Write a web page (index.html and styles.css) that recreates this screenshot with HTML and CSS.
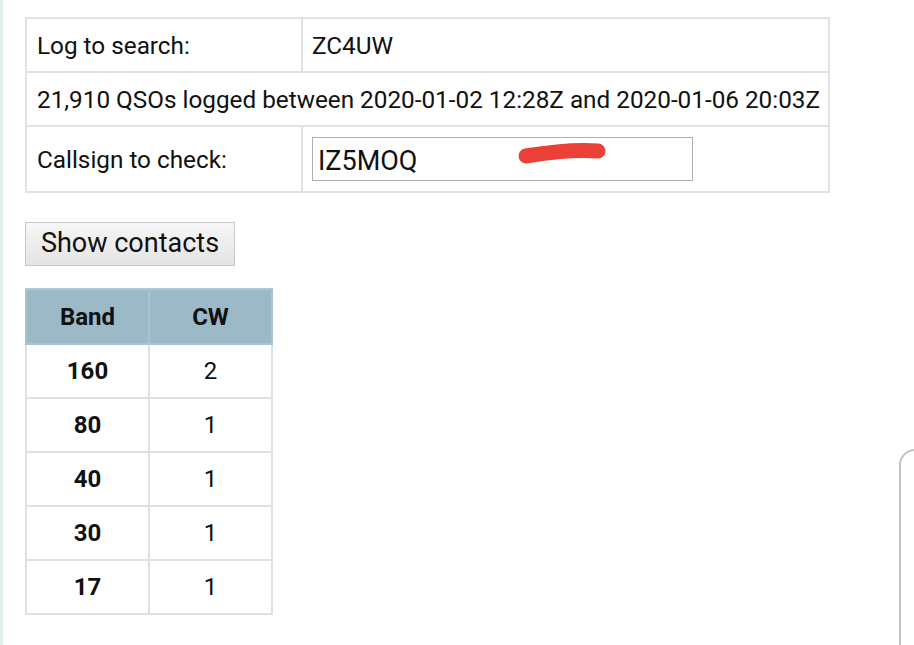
FILE: index.html
```html
<!DOCTYPE html>
<html>
<head>
<meta charset="utf-8">
<link rel="stylesheet" href="styles.css">
</head>
<body>
<div class="page">
  <table class="search">
    <tr>
      <td class="lbl">Log to search:</td>
      <td class="val">ZC4UW</td>
    </tr>
    <tr>
      <td colspan="2" class="info">21,910 QSOs logged between 2020-01-02 12:28Z and 2020-01-06 20:03Z</td>
    </tr>
    <tr class="callrow">
      <td class="lbl">Callsign to check:</td>
      <td class="val"><div class="inputwrap"><input class="call" type="text" value="IZ5MOQ"><svg class="scribble" width="110" height="40" viewBox="0 0 110 40"><path d="M16 25 C 40 21, 65 18, 88 20" stroke="#ea4037" stroke-width="15" stroke-linecap="round" fill="none"/></svg></div></td>
    </tr>
  </table>
  <button class="show">Show contacts</button>
  <table class="bands">
    <tr><th>Band</th><th>CW</th></tr>
    <tr><td class="b">160</td><td>2</td></tr>
    <tr><td class="b">80</td><td>1</td></tr>
    <tr><td class="b">40</td><td>1</td></tr>
    <tr><td class="b">30</td><td>1</td></tr>
    <tr><td class="b">17</td><td>1</td></tr>
  </table>
</div>
<div class="panel"></div>
</body>
</html>
```
FILE: styles.css
```css
html, body {
  margin: 0;
  padding: 0;
  background: #fff;
  height: 100%;
  overflow: hidden;
}
body {
  font-family: Roboto, "Liberation Sans", sans-serif;
  color: #111;
  border-left: 3px solid #e3eeee;
  box-sizing: border-box;
}
.page {
  padding: 17px 0 0 22px;
}
.search {
  border-collapse: collapse;
  width: 805px;
  table-layout: fixed;
  font-size: 24.3px;
}
.search td {
  border: 2px solid #e2e2e2;
  padding: 0 10px;
  height: 52px;
  white-space: nowrap;
}
.search td.lbl {
  width: 254px;
}
.search td.info {
  padding-right: 0;
  overflow: visible;
}
.search tr.callrow td {
  height: 64px;
}
.search td.val {
  padding-left: 9px;
}
.inputwrap {
  position: relative;
  width: 381px;
}
.call {
  display: block;
  box-sizing: border-box;
  width: 381px;
  height: 44px;
  border: 1px solid #b0b0b0;
  font-family: Roboto, "Liberation Sans", sans-serif;
  font-size: 27px;
  color: #111;
  padding: 4px 5px 0;
  margin: 0;
  outline: none;
}
.scribble {
  position: absolute;
  left: 198px;
  top: -6px;
}
.show {
  display: block;
  margin-top: 29px;
  width: 210px;
  height: 44px;
  border: 1px solid #c8c8c8;
  border-radius: 0;
  background: linear-gradient(#f6f6f6, #e4e4e4);
  font-family: Roboto, "Liberation Sans", sans-serif;
  font-size: 27px;
  color: #111;
  padding: 0 0 2px;
}
.bands {
  margin-top: 22px;
  border-collapse: collapse;
  font-size: 24px;
}
.bands th, .bands td {
  border: 2px solid #e0e0e0;
  width: 121px;
  height: 52px;
  text-align: center;
  padding: 0;
}
.bands th {
  background: #9bb9c7;
  border-color: #a9c3cf;
  border-top-color: #b3c7d0;
  height: 53px;
  font-weight: bold;
}
.bands td.b {
  font-weight: bold;
}
.panel {
  position: absolute;
  left: 899px;
  top: 449px;
  width: 120px;
  height: 300px;
  border: 2px solid #c2c2c2;
  border-radius: 16px;
}
```
